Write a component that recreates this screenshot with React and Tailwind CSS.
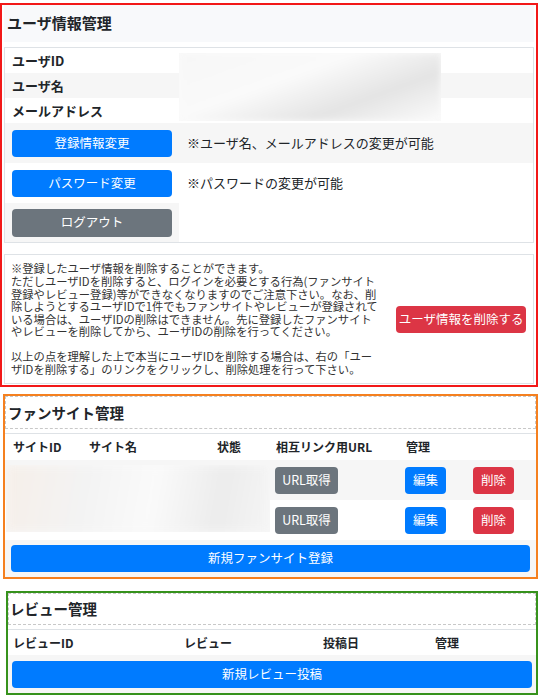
const blurBox = "bg-[linear-gradient(160deg,#f7f7f7_0%,#fafafa_40%,#e4e4e4_70%,#fbfbfb_100%)] blur-[3px]";

function Btn({ color = 'blue', className = '', children }) {
  const colors = {
    blue: 'bg-[#007bff] text-white',
    gray: 'bg-[#6c757d] text-white',
    red: 'bg-[#dc3545] text-white',
  };
  return (
    <button className={`${colors[color]} rounded-[4px] text-[12.5px] flex items-center justify-center ${className}`}>
      {children}
    </button>
  );
}

function UserSection() {
  return (
    <div className="mt-[3px] w-[538px] border-2 border-[#f21818] px-[2px]">
      <div className="h-[37px] bg-[#f8f9fb] flex items-center pl-[3px] text-[15px] font-bold text-[#212529]">
        ユーザ情報管理
      </div>
      <div className="mt-[5px] border border-[#dee2e6] text-[13px] text-[#212529]">
        <div className="relative">
          <div className="h-[25px] flex items-center pl-[7px] font-bold">ユーザID</div>
          <div className="h-[25px] flex items-center pl-[7px] font-bold bg-[#f6f6f6]">ユーザ名</div>
          <div className="h-[25px] flex items-center pl-[7px] font-bold">メールアドレス</div>
          <div className="absolute left-[174px] top-[5px] w-[262px] h-[68px] overflow-hidden bg-[#fafafa]">
            <div className={`w-full h-full ${blurBox}`} />
          </div>
        </div>
        <div className="h-[40px] flex items-center bg-[#f6f6f6]">
          <div className="w-[174px] px-[7px]">
            <Btn className="w-full h-[27px]">登録情報変更</Btn>
          </div>
          <span className="pl-[8px]">※ユーザ名、メールアドレスの変更が可能</span>
        </div>
        <div className="h-[40px] flex items-center">
          <div className="w-[174px] px-[7px]">
            <Btn className="w-full h-[27px]">パスワード変更</Btn>
          </div>
          <span className="pl-[8px]">※パスワードの変更が可能</span>
        </div>
        <div className="h-[39px] flex">
          <div className="w-[174px] px-[7px] bg-[#f6f6f6] flex items-center">
            <Btn color="gray" className="w-full h-[28px]">ログアウト</Btn>
          </div>
        </div>
      </div>
      <div className="mt-[11px] mb-[1px] border border-[#dee2e6] h-[130px] flex items-center pl-[6px] pr-[7px]">
        <p className="w-[386px] text-[11.3px] leading-[12.6px] text-[#333] whitespace-nowrap">
          ※登録したユーザ情報を削除することができます。<br />
          ただしユーザIDを削除すると、ログインを必要とする行為(ファンサイト<br />
          登録やレビュー登録)等ができなくなりますのでご注意下さい。なお、削<br />
          除しようとするユーザIDで1件でもファンサイトやレビューが登録されて<br />
          いる場合は、ユーザIDの削除はできません。先に登録したファンサイト<br />
          やレビューを削除してから、ユーザIDの削除を行ってください。<br />
          <br />
          以上の点を理解した上で本当にユーザIDを削除する場合は、右の「ユー<br />
          ザIDを削除する」のリンクをクリックし、削除処理を行って下さい。
        </p>
        <Btn color="red" className="ml-auto w-[130px] h-[27px]">ユーザ情報を削除する</Btn>
      </div>
    </div>
  );
}

function FanSiteSection() {
  const th = "font-bold text-[12px] pl-[8px]";
  const rows = [0, 1];
  return (
    <div className="mt-[7px] ml-[3px] w-[535px] border-2 border-[#f5801f]">
      <div className="h-[33px] border border-dashed border-[#c8c8c8] flex items-center pl-[2px] text-[14.5px] font-bold text-[#212529]">
        ファンサイト管理
      </div>
      <div className="mt-[4px] border-t border-[#dee2e6] text-[#212529]">
        <div className="h-[26px] flex items-center">
          <div className={`w-[76px] ${th}`}>サイトID</div>
          <div className={`w-[128px] ${th}`}>サイト名</div>
          <div className={`w-[59px] ${th}`}>状態</div>
          <div className={`w-[130px] ${th}`}>相互リンク用URL</div>
          <div className={`w-[68px] ${th}`}>管理</div>
        </div>
        <div className="relative">
          {rows.map((i) => (
            <div key={i} className={`h-[40px] flex items-center ${i === 0 ? 'bg-[#f6f6f6]' : ''}`}>
              <div className="w-[263px]" />
              <div className="w-[130px] pl-[7px]">
                <Btn color="gray" className="w-[63px] h-[27px]">URL取得</Btn>
              </div>
              <div className="w-[68px] pl-[7px]">
                <Btn className="w-[41px] h-[27px]">編集</Btn>
              </div>
              <div className="pl-[7px]">
                <Btn color="red" className="w-[41px] h-[27px]">削除</Btn>
              </div>
            </div>
          ))}
          <div className="absolute left-[1px] top-[5px] w-[264px] h-[67px] overflow-hidden bg-[#f8f8f8]">
            <div className="w-full h-full bg-[linear-gradient(100deg,#f6efe9_0%,#f3f3f3_30%,#fafafa_55%,#ececec_80%,#f5f5f5_100%)] blur-[4px]" />
          </div>
        </div>
        <div className="bg-[#f6f6f6] h-[37px] px-[6px] flex items-center">
          <Btn className="w-full h-[27px]">新規ファンサイト登録</Btn>
        </div>
      </div>
    </div>
  );
}

function ReviewSection() {
  return (
    <div className="mt-[12px] ml-[6px] w-[532px] border-2 border-[#36921c]">
      <div className="h-[32px] border border-dashed border-[#c8c8c8] flex items-center pl-[1px] text-[14.5px] font-bold text-[#212529]">
        レビュー管理
      </div>
      <div className="mt-[4px] border-t border-[#dee2e6] text-[#212529]">
        <div className="h-[25px] flex items-center text-[12px] font-bold">
          <div className="w-[176px] pl-[5px]">レビューID</div>
          <div className="w-[139px]">レビュー</div>
          <div className="w-[112px]">投稿日</div>
          <div>管理</div>
        </div>
        <div className="bg-[#f6f6f6] h-[38px] px-[4px] flex items-center">
          <Btn className="w-full h-[27px]">新規レビュー投稿</Btn>
        </div>
      </div>
    </div>
  );
}

export default function App() {
  return (
    <div className="w-[540px] h-[700px] bg-white font-['Noto_Sans_CJK_JP','Noto_Sans',sans-serif] overflow-hidden">
      <UserSection />
      <FanSiteSection />
      <ReviewSection />
    </div>
  );
}
